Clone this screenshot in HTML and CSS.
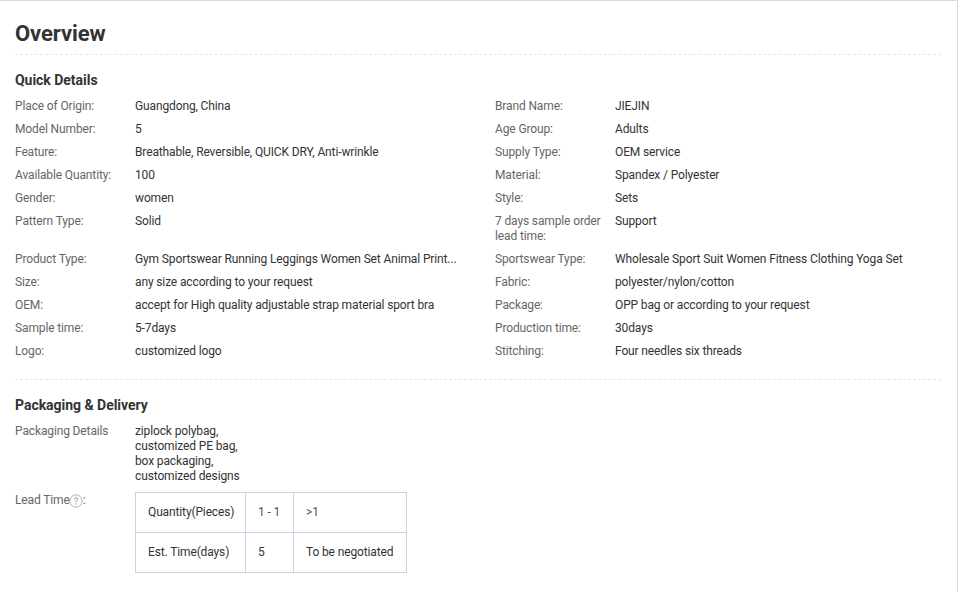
FILE: index.html
```html
<!DOCTYPE html>
<html lang="en">
<head>
<meta charset="utf-8">
<title>Overview</title>
<link rel="stylesheet" href="styles.css">
</head>
<body>
<main class="panel">
  <h1 class="title">Overview</h1>
  <section class="quick">
    <h2 class="heading">Quick Details</h2>
    <dl class="attrs">
      <div class="attr"><dt>Place of Origin:</dt><dd>Guangdong, China</dd></div>
      <div class="attr"><dt>Brand Name:</dt><dd>JIEJIN</dd></div>
      <div class="attr"><dt>Model Number:</dt><dd>5</dd></div>
      <div class="attr"><dt>Age Group:</dt><dd>Adults</dd></div>
      <div class="attr"><dt>Feature:</dt><dd>Breathable, Reversible, QUICK DRY, Anti-wrinkle</dd></div>
      <div class="attr"><dt>Supply Type:</dt><dd>OEM service</dd></div>
      <div class="attr"><dt>Available Quantity:</dt><dd>100</dd></div>
      <div class="attr"><dt>Material:</dt><dd>Spandex / Polyester</dd></div>
      <div class="attr"><dt>Gender:</dt><dd>women</dd></div>
      <div class="attr"><dt>Style:</dt><dd>Sets</dd></div>
      <div class="attr"><dt>Pattern Type:</dt><dd>Solid</dd></div>
      <div class="attr"><dt>7 days sample order lead time:</dt><dd>Support</dd></div>
      <div class="attr"><dt>Product Type:</dt><dd>Gym Sportswear Running Leggings Women Set Animal Print...</dd></div>
      <div class="attr"><dt>Sportswear Type:</dt><dd>Wholesale Sport Suit Women Fitness Clothing Yoga Set</dd></div>
      <div class="attr"><dt>Size:</dt><dd>any size according to your request</dd></div>
      <div class="attr"><dt>Fabric:</dt><dd>polyester/nylon/cotton</dd></div>
      <div class="attr"><dt>OEM:</dt><dd>accept for High quality adjustable strap material sport bra</dd></div>
      <div class="attr"><dt>Package:</dt><dd>OPP bag or according to your request</dd></div>
      <div class="attr"><dt>Sample time:</dt><dd>5-7days</dd></div>
      <div class="attr"><dt>Production time:</dt><dd>30days</dd></div>
      <div class="attr"><dt>Logo:</dt><dd>customized logo</dd></div>
      <div class="attr"><dt>Stitching:</dt><dd>Four needles six threads</dd></div>
    </dl>
  </section>
  <section class="packing">
    <h2 class="heading">Packaging &amp; Delivery</h2>
    <div class="attr"><div class="label">Packaging Details</div><div class="value">ziplock polybag,<br>customized PE bag,<br>box packaging,<br>customized designs</div></div>
    <div class="attr lead">
      <div class="label">Lead Time<svg class="help" width="14" height="14" viewBox="0 0 14 14" aria-hidden="true"><circle cx="7" cy="7" r="6.2" fill="none" stroke="#aab0b8"/><path d="M5.3 5.5c0-1 .8-1.6 1.7-1.6s1.7.6 1.7 1.5c0 1.2-1.7 1.3-1.7 2.8M7 9.4v1.2" fill="none" stroke="#7d838b"/></svg>:</div>
      <table class="lead-table">
        <tr><td class="c1">Quantity(Pieces)</td><td class="c2 accent">1 - 1</td><td class="c3 accent">&gt;1</td></tr>
        <tr><td class="c1">Est. Time(days)</td><td class="c2">5</td><td class="c3">To be negotiated</td></tr>
      </table>
    </div>
  </section>
</main>
</body>
</html>
```
FILE: styles.css
```css
* { box-sizing: border-box; }
html, body { margin: 0; padding: 0; background: #fff; }
body { font-family: Roboto, "Liberation Sans", sans-serif; font-size: 12px; line-height: 15px; color: #333; letter-spacing: -0.13px; }
.panel {
  width: 958px;
  height: 592px;
  overflow: hidden;
  padding: 0 16px 0 15px;
  border-top: 1px solid #ddd;
  border-right: 1px solid #ddd;
}
.title {
  margin: 0;
  padding: 20px 0 6px;
  height: 54px;
  font-size: 22px;
  line-height: 26px;
  font-weight: 700;
  letter-spacing: -0.1px;
  color: #333;
  border-bottom: 1px dashed #e6e6e6;
}
.heading { margin: 0; font-size: 14px; line-height: 18px; font-weight: 700; color: #333; letter-spacing: -0.03px; }
.quick { padding: 16px 0 12px; border-bottom: 1px dashed #e6e6e6; }
.quick .heading { margin-bottom: 10px; }
.attrs { margin: 0; display: grid; grid-template-columns: 480px 1fr; }
.attr { display: flex; padding-bottom: 8px; }
.attr dt, .label { flex: 0 0 120px; padding-right: 10px; color: #666; }
.attr dd, .value { margin: 0; flex: 1; color: #333; }
.packing { padding-top: 16px; }
.packing .heading { margin-bottom: 10px; }
.help { margin-left: -1px; vertical-align: -4px; }
.lead { padding: 0; }
.lead .label { padding-top: 1px; }
.lead-table { border-collapse: collapse; table-layout: fixed; width: 272px; }
.lead-table td { height: 40px; padding: 0 12px; border: 1px solid #c9d3e3; white-space: nowrap; }
.c1 { width: 110px; }
.c2 { width: 48px; }
.accent { color: #3f5566; }
```
